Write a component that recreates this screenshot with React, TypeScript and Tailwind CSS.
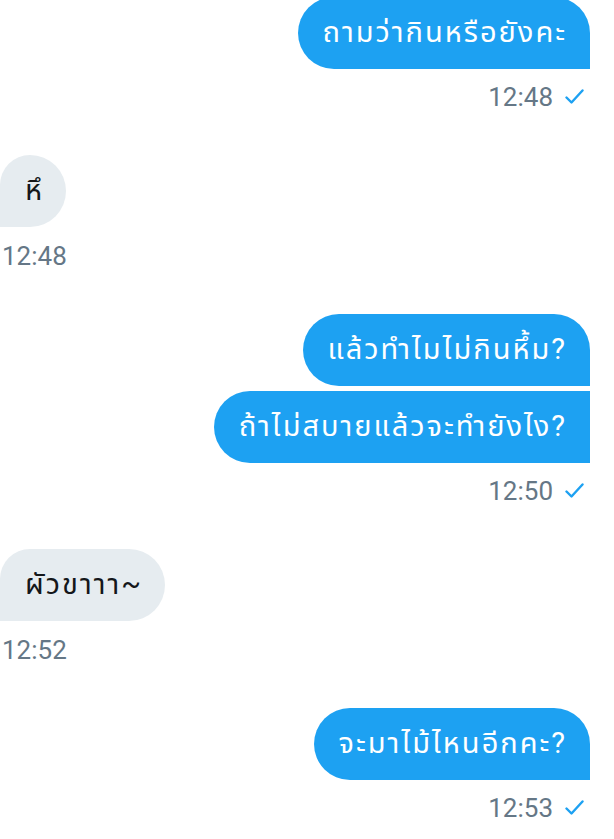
const font = { fontFamily: 'Roboto, "Noto Sans Thai", "Noto Sans", sans-serif' };

type Msg = { text: string };

const Check = () => (
  <svg width="19" height="16" viewBox="0 0 19 16" className="ml-[12px]">
    <polyline
      points="1.5,8.5 6.5,13.5 17.5,1.5"
      fill="none"
      stroke="#1da1f2"
      strokeWidth="2.4"
      strokeLinecap="round"
      strokeLinejoin="round"
    />
  </svg>
);

const SentGroup = ({ msgs, time, first }: { msgs: Msg[]; time: string; first?: boolean }) => (
  <div className={`flex flex-col items-end ${first ? "mt-[-3px]" : "mt-[43px]"}`}>
    <div className="flex flex-col items-end gap-[5px] pr-[24px]">
      {msgs.map((m, i) => {
        const cls =
          i === 0
            ? "rounded-tl-[36px] rounded-tr-[36px] rounded-bl-[36px]"
            : "rounded-tl-[36px] rounded-bl-[36px]";
        return (
          <div
            key={i}
            className={`h-[72px] flex items-center pl-[25px] pr-[23px] bg-[#1da1f2] text-white text-[29px] tracking-[2px] ${cls}`}
          >
            {m.text}
          </div>
        );
      })}
    </div>
    <div className="mt-[13px] pr-[30px] h-[30px] flex items-center text-[26px] text-[#657786]">
      <span>{time}</span>
      <Check />
    </div>
  </div>
);

const ReceivedGroup = ({ text, time }: { text: string; time: string }) => (
  <div className="flex flex-col items-start mt-[43px]">
    <div className="h-[72px] flex items-center pl-[25px] pr-[22px] bg-[#e6ecf0] text-[#14171a] text-[29px] tracking-[2px] rounded-tl-[30px] rounded-tr-[36px] rounded-br-[36px]">
      {text}
    </div>
    <div className="mt-[14px] h-[30px] pl-[2px] flex items-center text-[26px] text-[#657786]">
      {time}
    </div>
  </div>
);

export default function App() {
  return (
    <div className="w-[614px] h-[839px] overflow-hidden bg-white" style={font}>
      <SentGroup first msgs={[{ text: "ถามว่ากินหรือยังคะ" }]} time="12:48" />
      <ReceivedGroup text="หึ" time="12:48" />
      <SentGroup
        msgs={[{ text: "แล้วทำไมไม่กินหึ้ม?" }, { text: "ถ้าไม่สบายแล้วจะทำยังไง?" }]}
        time="12:50"
      />
      <ReceivedGroup text="ผัวขาาา~" time="12:52" />
      <SentGroup msgs={[{ text: "จะมาไม้ไหนอีกคะ?" }]} time="12:53" />
    </div>
  );
}
